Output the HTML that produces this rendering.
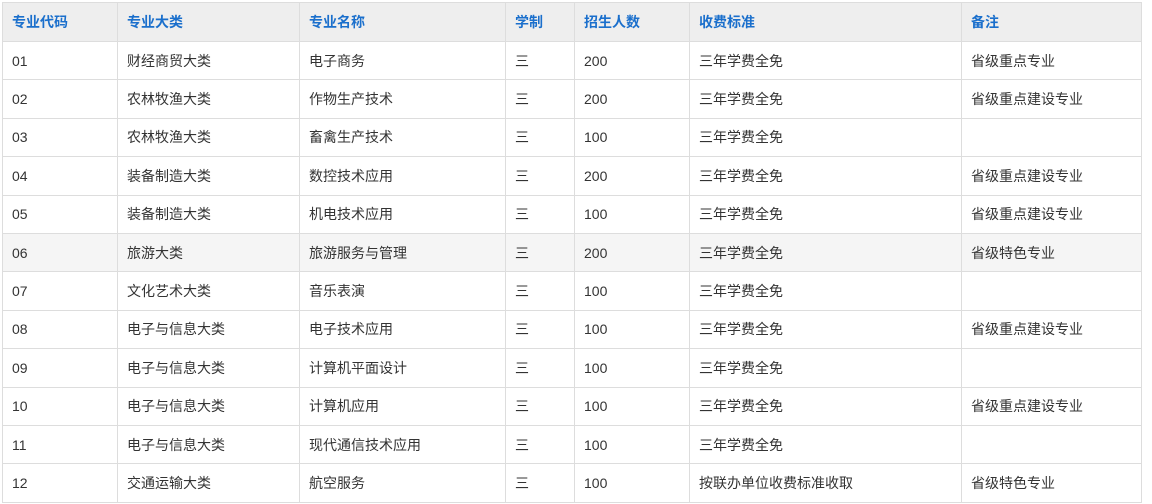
<!DOCTYPE html>
<html><head><meta charset="utf-8"><style>
body{margin:0;background:#fff;}
table{position:absolute;left:2px;top:2px;border-collapse:collapse;table-layout:fixed;width:1139px;font-family:"Liberation Sans","Noto Sans CJK SC",sans-serif;font-size:14px;color:#333;}
td,th{border:1px solid #dddddd;padding:0 0 0 9px;text-align:left;height:37.4px;white-space:nowrap;}
th{background:#eeeeee;color:#1a6fcc;font-weight:bold;height:38px;}
tr.h td{background:#f5f5f5;}
</style></head><body>
<table>
<colgroup><col style="width:115px"><col style="width:182px"><col style="width:206px"><col style="width:69px"><col style="width:115px"><col style="width:272px"><col style="width:180px"></colgroup>
<tr><th>专业代码</th><th>专业大类</th><th>专业名称</th><th>学制</th><th>招生人数</th><th>收费标准</th><th>备注</th></tr>
<tr><td>01</td><td>财经商贸大类</td><td>电子商务</td><td>三</td><td>200</td><td>三年学费全免</td><td>省级重点专业</td></tr>
<tr><td>02</td><td>农林牧渔大类</td><td>作物生产技术</td><td>三</td><td>200</td><td>三年学费全免</td><td>省级重点建设专业</td></tr>
<tr><td>03</td><td>农林牧渔大类</td><td>畜禽生产技术</td><td>三</td><td>100</td><td>三年学费全免</td><td></td></tr>
<tr><td>04</td><td>装备制造大类</td><td>数控技术应用</td><td>三</td><td>200</td><td>三年学费全免</td><td>省级重点建设专业</td></tr>
<tr><td>05</td><td>装备制造大类</td><td>机电技术应用</td><td>三</td><td>100</td><td>三年学费全免</td><td>省级重点建设专业</td></tr>
<tr class="h"><td>06</td><td>旅游大类</td><td>旅游服务与管理</td><td>三</td><td>200</td><td>三年学费全免</td><td>省级特色专业</td></tr>
<tr><td>07</td><td>文化艺术大类</td><td>音乐表演</td><td>三</td><td>100</td><td>三年学费全免</td><td></td></tr>
<tr><td>08</td><td>电子与信息大类</td><td>电子技术应用</td><td>三</td><td>100</td><td>三年学费全免</td><td>省级重点建设专业</td></tr>
<tr><td>09</td><td>电子与信息大类</td><td>计算机平面设计</td><td>三</td><td>100</td><td>三年学费全免</td><td></td></tr>
<tr><td>10</td><td>电子与信息大类</td><td>计算机应用</td><td>三</td><td>100</td><td>三年学费全免</td><td>省级重点建设专业</td></tr>
<tr><td>11</td><td>电子与信息大类</td><td>现代通信技术应用</td><td>三</td><td>100</td><td>三年学费全免</td><td></td></tr>
<tr><td>12</td><td>交通运输大类</td><td>航空服务</td><td>三</td><td>100</td><td>按联办单位收费标准收取</td><td>省级特色专业</td></tr>
</table>
</body></html>
